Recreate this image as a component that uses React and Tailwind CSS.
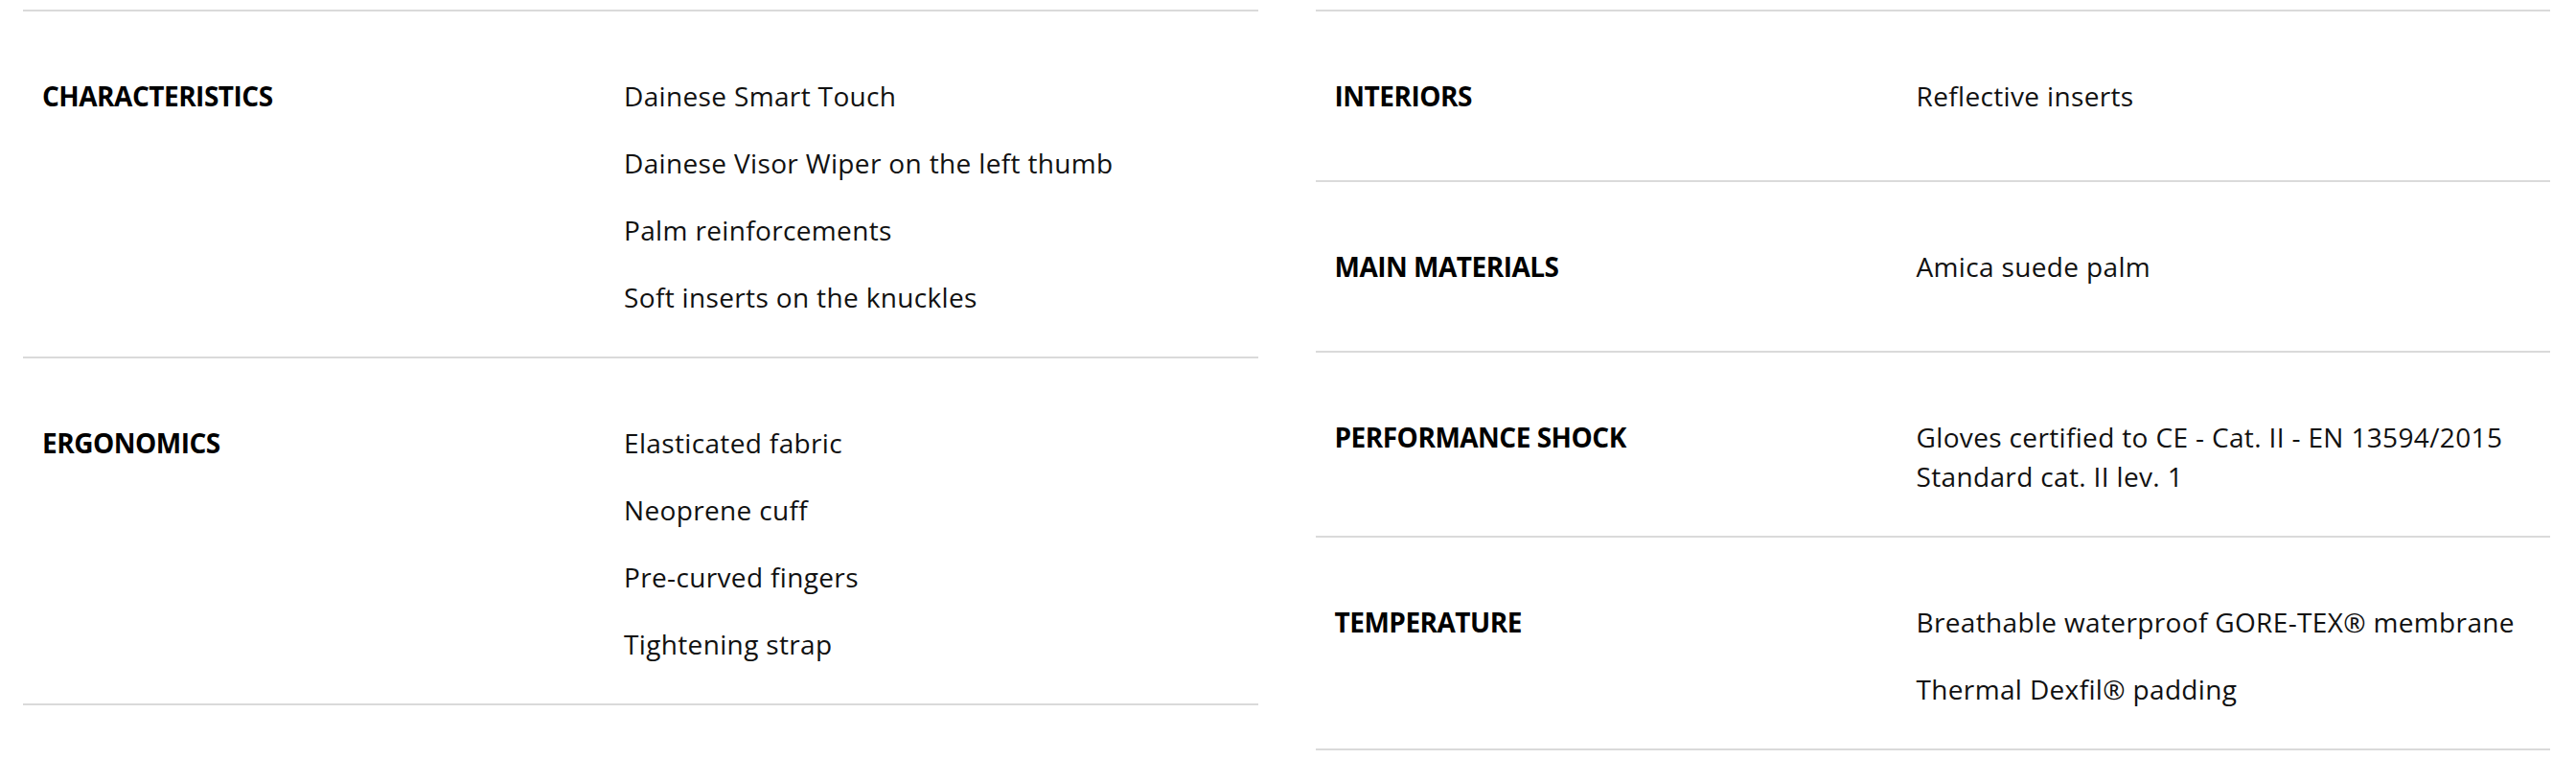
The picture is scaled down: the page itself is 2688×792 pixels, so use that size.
import React from "react";

const left = [
  { label: "CHARACTERISTICS", items: ["Dainese Smart Touch", "Dainese Visor Wiper on the left thumb", "Palm reinforcements", "Soft inserts on the knuckles"] },
  { label: "ERGONOMICS", items: ["Elasticated fabric", "Neoprene cuff", "Pre-curved fingers", "Tightening strap"] },
];

const right = [
  { label: "INTERIORS", items: ["Reflective inserts"] },
  { label: "MAIN MATERIALS", items: ["Amica suede palm"] },
  { label: "PERFORMANCE SHOCK", items: ["Gloves certified to CE - Cat. II - EN 13594/2015 Standard cat. II lev. 1"] },
  { label: "TEMPERATURE", items: ["Breathable waterproof GORE-TEX® membrane", "Thermal Dexfil® padding"] },
];

function SpecRow({ label, items }) {
  return (
    <div className="flex min-h-[178px] border-t-2 border-[#dadada] pt-[68px] pb-[41px] pl-[20px]">
      <div className="w-[607px] shrink-0 text-[28px] leading-[41px] font-bold text-black tracking-[-0.5px]">{label}</div>
      <ul className="flex flex-col gap-[29px] pr-[20px] text-[28px] leading-[41px] tracking-[0.35px] text-[#111]">
        {items.map((item) => (
          <li key={item}>{item}</li>
        ))}
      </ul>
    </div>
  );
}

function SpecColumn({ rows }) {
  return (
    <div className="border-b-2 border-[#dadada]">
      {rows.map((r) => (
        <SpecRow key={r.label} label={r.label} items={r.items} />
      ))}
    </div>
  );
}

export default function App() {
  return (
    <div className="min-h-[792px] bg-white pt-[10px] pl-[24px] pr-[27px] font-['Open_Sans',sans-serif]">
      <div className="grid grid-cols-2 items-start gap-[60px]">
        <SpecColumn rows={left} />
        <SpecColumn rows={right} />
      </div>
    </div>
  );
}
